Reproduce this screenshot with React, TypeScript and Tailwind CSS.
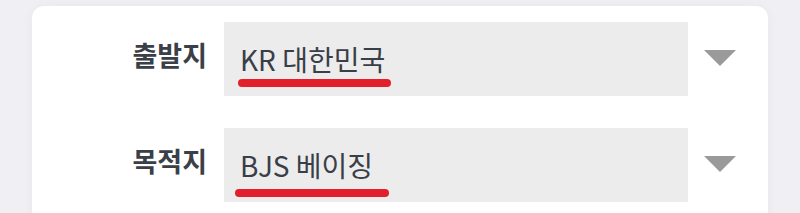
import React from "react";

function Row({
  label,
  value,
  lineClass,
}: {
  label: string;
  value: string;
  lineClass: string;
}) {
  return (
    <div className="flex items-center">
      <div className="w-[175px] text-right text-[27px] font-bold leading-[32px] text-[#3b3f47] -mt-[8px]">
        {label}
      </div>
      <div className="relative ml-[17px] flex h-[74px] w-[464px] items-center bg-[#ececec] pl-4">
        <span className="text-[28px] leading-[32px] text-[#3a3e47] -mt-[1px]">{value}</span>
        <span className={lineClass} />
      </div>
      <div className="ml-4 flex w-[32px] items-center justify-center -mt-[3px]">
        <svg width="32" height="16" viewBox="0 0 32 16">
          <polygon points="0,0 32,0 16,16" fill="#9a9a9a" />
        </svg>
      </div>
    </div>
  );
}

export default function App() {
  return (
    <div
      className="h-[213px] w-[800px] overflow-hidden bg-[#efeff4] px-8 pt-[6px]"
      style={{ fontFamily: '"Noto Sans CJK KR", "Noto Sans", sans-serif' }}
    >
      <div className="flex h-[220px] flex-col gap-8 rounded-t-[12px] bg-white pt-4 shadow-[0_0_12px_rgba(0,0,0,0.04)]">
        <Row
          label="출발지"
          value="KR 대한민국"
          lineClass="absolute left-[14px] top-[57px] h-[8px] w-[153px] rounded-full bg-[#e2202b]"
        />
        <Row
          label="목적지"
          value="BJS 베이징"
          lineClass="absolute left-[11px] top-[61px] h-[8px] w-[154px] rounded-full bg-[#e2202b]"
        />
      </div>
    </div>
  );
}
